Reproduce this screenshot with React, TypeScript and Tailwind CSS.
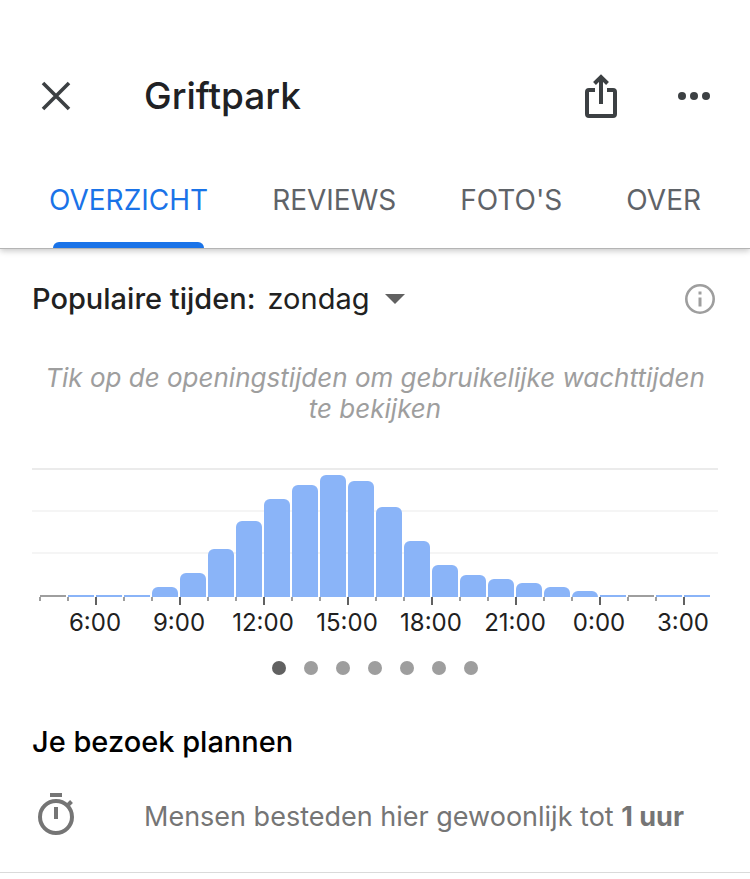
const FONT = "font-['Inter','Liberation_Sans',sans-serif]";

const tabs = ["OVERZICHT", "REVIEWS", "FOTO'S", "OVER"];

const days = ["zondag", "maandag", "dinsdag", "woensdag", "donderdag", "vrijdag", "zaterdag"];

// Crowd level per hour, from 4:00 up to 3:00; null means no data.
const hours: (number | null)[] = [
  null, 2, 2, 2, 10, 24, 48, 76, 98, 112, 122, 116, 90, 56, 32, 22, 18, 14, 10, 6, 2, null, 2, 2,
];

const labels = ["6:00", "9:00", "12:00", "15:00", "18:00", "21:00", "0:00", "3:00"];

function CloseIcon() {
  return (
    <svg width="32" height="32" viewBox="0 0 32 32" fill="none" stroke="#3c4043" strokeWidth="3.600" aria-hidden="true">
      <path d="M3 3 29 29M29 3 3 29" />
    </svg>
  );
}

function ShareIcon() {
  return (
    <svg width="36" height="48" viewBox="0 0 36 48" fill="none" stroke="#3c4043" strokeWidth="4" aria-hidden="true">
      <path d="M12 18H6a2 2 0 0 0-2 2V42a2 2 0 0 0 2 2H30a2 2 0 0 0 2-2V20a2 2 0 0 0-2-2H24" />
      <path d="M18 32V5M11.5 11.5 18 5 24.500 11.500" />
    </svg>
  );
}

function MoreIcon() {
  return (
    <svg width="32" height="8" viewBox="0 0 32 8" fill="#3c4043" aria-hidden="true">
      <circle cx="4" cy="4" r="4" />
      <circle cx="16" cy="4" r="4" />
      <circle cx="28" cy="4" r="4" />
    </svg>
  );
}

function InfoIcon() {
  return (
    <svg width="30" height="30" viewBox="0 0 30 30" aria-hidden="true">
      <circle cx="15" cy="15" r="13.700" fill="none" stroke="#9e9e9e" strokeWidth="2.600" />
      <path d="M13.500 13.500h3V22.500h-3zM13.500 7.500h3v3h-3z" fill="#9e9e9e" />
    </svg>
  );
}

function TimerIcon() {
  return (
    <svg width="38" height="44" viewBox="0 0 38 44" fill="none" stroke="#757575" strokeWidth="4" aria-hidden="true">
      <circle cx="19" cy="25" r="16" />
      <path d="M13 3H25M19 15V27M30 14 34.500 9.500" />
    </svg>
  );
}

function Header() {
  return (
    <header className="relative border-b border-[#b4b4b4] bg-white pt-16 shadow-[0_2px_6px_rgba(0,0,0,0.22)]">
      <div className="flex h-16 items-center pr-10 pl-10">
        <button type="button" aria-label="Sluiten" className="flex w-[104px]">
          <CloseIcon />
        </button>
        <h1 className="flex-1 text-[37px] leading-[48px] font-medium text-[#202124]">Griftpark</h1>
        <button type="button" aria-label="Delen" className="mr-[59px] flex">
          <ShareIcon />
        </button>
        <button type="button" aria-label="Meer opties" className="flex">
          <MoreIcon />
        </button>
      </div>
      <div role="tablist" className="mt-6 flex h-24 justify-between px-[49px]">
        {tabs.map((tab, i) => (
          <button
            key={tab}
            type="button"
            role="tab"
            aria-selected={i === 0}
            className={
              i === 0
                ? "relative text-[28px] leading-8 text-[#1a73e8]"
                : "text-[28px] leading-8 text-[#5f6368]"
            }
          >
            {tab}
            {i === 0 && <span className="absolute inset-x-1 bottom-0 h-1.5 rounded-t-md bg-[#1a73e8]" />}
          </button>
        ))}
      </div>
    </header>
  );
}

function Chart() {
  return (
    <div className="mt-11">
      <div className="relative">
        <div className="absolute inset-x-8 top-0 flex flex-col gap-10">
          <div className="h-0.5 bg-[#ebebeb]" />
          <div className="h-0.5 bg-[#f5f5f5]" />
          <div className="h-0.5 bg-[#f5f5f5]" />
        </div>
        <div className="relative flex items-end px-[39px] pt-[7px]">
          {hours.map((value, i) => (
            <div key={i} className="flex-1">
              <div
                className={
                  value === null
                    ? "mx-px bg-[#9e9e9e]"
                    : value > 2
                      ? "mx-px rounded-t-md bg-[#8ab4f8]"
                      : "mx-px bg-[#8ab4f8]"
                }
                style={{ height: value ?? 2 }}
              />
              <div className="h-2">
                <div className={i % 3 === 2 ? "h-2 w-0.5 bg-[#616161]" : "h-1 w-0.5 bg-[#9e9e9e]"} />
              </div>
            </div>
          ))}
        </div>
      </div>
      <div className="mt-0.5 grid grid-cols-8 pr-[25px] pl-[53px] text-center text-2xl leading-8 text-[#212121]">
        {labels.map((label) => (
          <span key={label}>{label}</span>
        ))}
      </div>
      <div className="mt-[22px] flex justify-center gap-[18px]">
        {days.map((day, i) => (
          <button
            key={day}
            type="button"
            aria-label={day}
            className={i === 0 ? "size-3.5 rounded-full bg-[#616161]" : "size-3.5 rounded-full bg-[#9e9e9e]"}
          />
        ))}
      </div>
    </div>
  );
}

export default function App() {
  return (
    <div className={`min-h-screen bg-white ${FONT}`}>
      <Header />
      <main>
        <section>
          <div className="flex h-[100px] items-center px-8 text-[29px] leading-9 text-[#212121]">
            <label htmlFor="day" className="mr-3 font-medium">
              Populaire tijden:
            </label>
            <select id="day" className="field-sizing-content appearance-none bg-transparent pr-9">
              {days.map((day) => (
                <option key={day}>{day}</option>
              ))}
            </select>
            <svg width="20" height="10" viewBox="0 0 20 10" className="pointer-events-none -ml-5" aria-hidden="true">
              <path d="M0 0H20L10 10Z" fill="#616161" />
            </svg>
            <button type="button" aria-label="Informatie" className="mr-[3px] ml-auto flex">
              <InfoIcon />
            </button>
          </div>
          <p className="mt-[13px] px-10 text-center text-[26px] leading-[31px] text-[#9e9e9e] italic">
            Tik op de openingstijden om gebruikelijke wachttijden te bekijken
          </p>
          <Chart />
        </section>
        <section className="mt-[49px] border-b border-[#dadada] px-8 pb-9">
          <h2 className="text-[29px] leading-9 font-medium text-black">Je bezoek plannen</h2>
          <div className="mt-8 flex items-start pl-[5px]">
            <TimerIcon />
            <p className="ml-[69px] pt-[7px] text-[27px] leading-9 text-[#757575]">
              Mensen besteden hier gewoonlijk tot <strong className="font-bold">1 uur</strong>
            </p>
          </div>
        </section>
      </main>
    </div>
  );
}
